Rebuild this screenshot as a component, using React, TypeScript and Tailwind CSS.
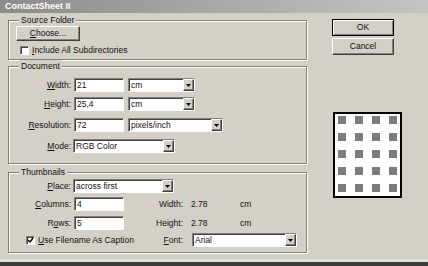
import type { ReactNode } from 'react'

const raised =
  'border border-t-white border-l-white border-b-[#404040] border-r-[#404040] shadow-[inset_-1px_-1px_0_#808080]'
const sunken =
  'border border-t-[#808080] border-l-[#808080] border-b-white border-r-white shadow-[inset_1px_1px_0_#404040]'

const Group = ({ title, className, children }: { title: ReactNode; className: string; children: ReactNode }) => (
  <div className={`border border-[#808080] shadow-[inset_1px_1px_0_#fff,1px_1px_0_#fff] ${className}`}>
    <div className="-mt-[7px] ml-[10px] w-fit bg-[#d4d0c8] px-[2px] leading-[12px]">{title}</div>
    {children}
  </div>
)

const Field = ({ value, className }: { value: string; className: string }) => (
  <div className={`h-[14px] bg-white pl-[2px] leading-[12px] ${sunken} ${className}`}>{value}</div>
)

const Arrow = () => (
  <svg width="5" height="3" viewBox="0 0 5 3">
    <path d="M0 0h5L2.5 3z" fill="#000" />
  </svg>
)

const Select = ({ value, className }: { value: string; className: string }) => (
  <div className={`flex h-[14px] bg-white ${sunken} ${className}`}>
    <span className="flex-1 pl-[2px] leading-[12px]">{value}</span>
    <div className={`flex w-[11px] items-center justify-center bg-[#d4d0c8] ${raised}`}>
      <Arrow />
    </div>
  </div>
)

const Label = ({ children, className = 'w-[63px]' }: { children: ReactNode; className?: string }) => (
  <span className={`shrink-0 pr-[1px] text-right leading-[12px] ${className}`}>{children}</span>
)

const Check = ({ checked }: { checked?: boolean }) => (
  <div className={`flex h-[9px] w-[9px] shrink-0 items-center justify-center bg-white ${sunken}`}>
    {checked && (
      <svg width="7" height="7" viewBox="0 0 7 7">
        <path d="M1 3l2 2 3-4" stroke="#000" strokeWidth="1.4" fill="none" />
      </svg>
    )}
  </div>
)

export default function App() {
  return (
    <div className="flex h-[266px] w-[428px] flex-col overflow-hidden bg-[#d4d0c8] font-['Liberation_Sans',Arial,sans-serif] text-[8.5px] text-[#111]">
      <div className="flex h-[13px] items-center bg-gradient-to-r from-[#8c8c8c] via-[#a8a8a8] to-[#c4c4c4] pl-[5px] text-[9px] font-bold text-white">
        ContactSheet II
      </div>

      <div className="flex flex-1">
        <div className="ml-[8px] w-[299px]">
          <Group title="Source Folder" className="mt-[7px] pb-[3px]">
            <button className={`ml-[7px] flex h-[15px] w-[64px] items-center justify-center ${raised}`}>
              <span><u>C</u>hoose...</span>
            </button>
            <div className="ml-[11px] mt-[3px] flex h-[12px] items-center gap-[3px]">
              <Check />
              <span><u>I</u>nclude All Subdirectories</span>
            </div>
          </Group>

          <Group title="Document" className="mt-[6px] pb-[10px]">
            <div className="mt-[6px] flex h-[14px] items-center">
              <Label><u>W</u>idth:</Label>
              <Field value="21" className="ml-[2px] w-[50px]" />
              <Select value="cm" className="ml-[4px] w-[67px]" />
            </div>
            <div className="mt-[5px] flex h-[14px] items-center">
              <Label><u>H</u>eight:</Label>
              <Field value="25,4" className="ml-[2px] w-[50px]" />
              <Select value="cm" className="ml-[4px] w-[67px]" />
            </div>
            <div className="mt-[7px] flex h-[14px] items-center">
              <Label><u>R</u>esolution:</Label>
              <Field value="72" className="ml-[2px] w-[50px]" />
              <Select value="pixels/inch" className="ml-[4px] w-[95px]" />
            </div>
            <div className="mt-[7px] flex h-[14px] items-center">
              <Label><u>M</u>ode:</Label>
              <Select value="RGB Color" className="ml-[1px] w-[102px]" />
            </div>
          </Group>

          <Group title="Thumbnails" className="mt-[8px] pb-[5px]">
            <div className="mt-[1px] flex h-[14px] items-center">
              <Label><u>P</u>lace:</Label>
              <Select value="across first" className="ml-[1px] w-[101px]" />
            </div>
            <div className="mt-[4px] flex h-[14px] items-center">
              <Label><u>C</u>olumns:</Label>
              <Field value="4" className="ml-[2px] w-[50px]" />
              <Label className="w-[60px]">Width:</Label>
              <span className="ml-[7px] w-[49px]">2.78</span>
              <span>cm</span>
            </div>
            <div className="mt-[5px] flex h-[14px] items-center">
              <Label>R<u>o</u>ws:</Label>
              <Field value="5" className="ml-[2px] w-[50px]" />
              <Label className="w-[60px]">Height:</Label>
              <span className="ml-[7px] w-[49px]">2.78</span>
              <span>cm</span>
            </div>
            <div className="mt-[3px] flex h-[14px] items-center">
              <div className="flex w-[131px] shrink-0 items-center gap-[3px] whitespace-nowrap pl-[17px]">
                <Check checked />
                <span><u>U</u>se Filename As Caption</span>
              </div>
              <Label className="w-[44px]"><u>F</u>ont:</Label>
              <Select value="Arial" className="ml-[8px] w-[105px]" />
            </div>
          </Group>
        </div>

        <div className="ml-[25px] flex w-[70px] flex-col pt-[6px]">
          <button className="flex h-[17px] w-[62px] items-center justify-center border border-black bg-[#d4d0c8] shadow-[inset_1px_1px_0_#fff,inset_-1px_-1px_0_#808080]">
            OK
          </button>
          <button className={`mt-[2px] flex h-[17px] w-[62px] items-center justify-center ${raised}`}>
            Cancel
          </button>
          <div className="ml-[1px] mt-[57px] flex h-[86px] w-[69px] flex-col justify-between border-2 border-black bg-white px-[3px] pb-[4px] pt-[2px]">
            {[0, 1, 2, 3, 4].map((r) => (
              <div key={r} className="flex justify-between">
                {[0, 1, 2, 3].map((c) => (
                  <div key={c} className="h-[8px] w-[8px] bg-[#7c7c7c]" />
                ))}
              </div>
            ))}
          </div>
        </div>
      </div>

      <div className="h-[3px] bg-[#dfe1d9]" />
      <div className="h-[4px] bg-[#3c3c3c]" />
    </div>
  )
}
